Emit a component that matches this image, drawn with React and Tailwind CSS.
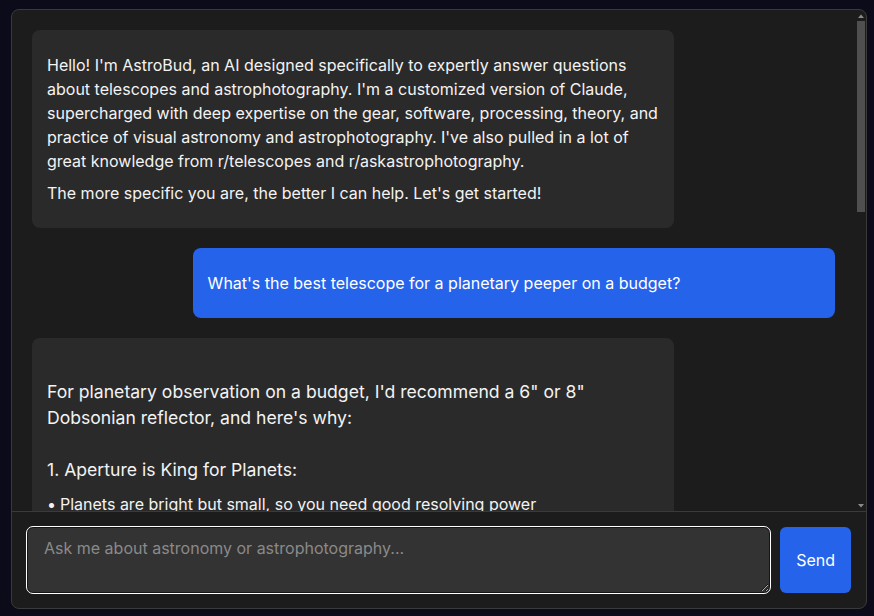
import { useEffect, useRef } from 'react';

const intro = [
  "Hello! I'm AstroBud, an AI designed specifically to expertly answer questions about telescopes and astrophotography. I'm a customized version of Claude, supercharged with deep expertise on the gear, software, processing, theory, and practice of visual astronomy and astrophotography. I've also pulled in a lot of great knowledge from r/telescopes and r/askastrophotography.",
  "The more specific you are, the better I can help. Let's get started!",
];

const question = "What's the best telescope for a planetary peeper on a budget?";

const answerSections = [
  {
    title: '1. Aperture is King for Planets:',
    bullets: [
      'Planets are bright but small, so you need good resolving power',
      'A 6" or 8" mirror shows the Cassini Division, Jupiter\'s belts and the Great Red Spot',
      'More aperture also means better detail on Mars during opposition',
    ],
  },
  {
    title: '2. Long Focal Length Helps:',
    bullets: [
      'Dobsonians typically run around f/6 to f/8, which is forgiving on eyepieces',
      'High magnification is easy to reach without expensive barlows',
    ],
  },
  {
    title: '3. Best Bang for Your Buck:',
    bullets: [
      'A Dobsonian mount is simple, stable and cheap, so your money goes into optics',
      'Good options: Sky-Watcher Classic 150P / 200P, Apertura AD8, Zhumell Z8',
    ],
  },
];

// Scroll arrow glyph for the scrollbar column
const Arrow = ({ down }) => (
  <svg width="6" height="4" viewBox="0 0 6 4" className="block">
    <path d={down ? 'M0 0h6L3 3.5z' : 'M0 4h6L3 0.5z'} fill="#8a8a8a" />
  </svg>
);

export default function App() {
  const inputRef = useRef(null);

  useEffect(() => {
    inputRef.current?.focus();
  }, []);

  return (
    <div className="w-full h-screen bg-[#0b0b1a] pt-[9px] pl-[11px] font-['Inter',sans-serif] text-[#f3f3f3]">
      <div className="w-[856px] h-[600px] flex flex-col bg-[#1c1c1c] border border-[#3a3a3a] rounded-lg overflow-hidden">
        <div className="flex-1 min-h-0 flex">
          {/* Messages */}
          <div className="flex-1 min-w-0 overflow-y-auto [scrollbar-width:none] p-5 flex flex-col gap-5">
            <div className="max-w-[80%] self-start bg-[#2a2a2a] rounded-lg p-[15px] text-base leading-6">
              {intro.map((p, i) => (
                <p key={i} className="my-2">{p}</p>
              ))}
            </div>

            <div className="w-[80%] self-end bg-[#2563eb] rounded-lg p-[15px] text-base leading-6 text-white">
              <p className="my-2">{question}</p>
            </div>

            <div className="max-w-[80%] self-start bg-[#2a2a2a] rounded-lg p-[15px] shrink-0">
              <p className="whitespace-pre-wrap text-[17.6px] leading-[26px]">
                {"\nFor planetary observation on a budget, I'd recommend a 6\" or 8\" Dobsonian reflector, and here's why:\n"}
              </p>
              {answerSections.map((s, i) => (
                <div key={i}>
                  <p className="text-[17.6px] leading-[26px] mt-[26px]">{s.title}</p>
                  <ul className="mt-[9px] mb-2 text-base leading-6">
                    {s.bullets.map((b, j) => (
                      <li key={j} className="flex">
                        <span className="w-[13px] shrink-0">•</span>
                        <span>{b}</span>
                      </li>
                    ))}
                  </ul>
                </div>
              ))}
              <p className="text-[17.6px] leading-[26px] mt-[26px]">
                Pair it with a decent planetary eyepiece and you'll be seeing Saturn's rings and Jupiter's moons in no time. Happy observing!
              </p>
            </div>
          </div>

          {/* Scrollbar */}
          <div className="w-[11px] shrink-0 flex flex-col pl-[2px] pr-px">
            <div className="h-[11px] flex items-center justify-center pt-px">
              <Arrow />
            </div>
            <div className="h-[191px] bg-[#4f4f4f]" />
            <div className="flex-1" />
            <div className="h-[11px] flex items-center justify-center">
              <Arrow down />
            </div>
          </div>
        </div>

        {/* Input */}
        <div className="flex gap-2.5 p-[15px] border-t border-[#3a3a3a]">
          <textarea
            ref={inputRef}
            placeholder="Ask me about astronomy or astrophotography..."
            className="flex-1 h-[66px] bg-[#333333] border border-[#151515] rounded-md px-4 py-2 text-base leading-6 text-[#f3f3f3] placeholder:text-[#8a8a8a] caret-white outline outline-1 outline-white font-['Inter',sans-serif] [color-scheme:dark]"
          />
          <button className="px-4 bg-[#2563eb] text-white text-base rounded-md font-['Inter',sans-serif]">
            Send
          </button>
        </div>
      </div>
    </div>
  );
}
